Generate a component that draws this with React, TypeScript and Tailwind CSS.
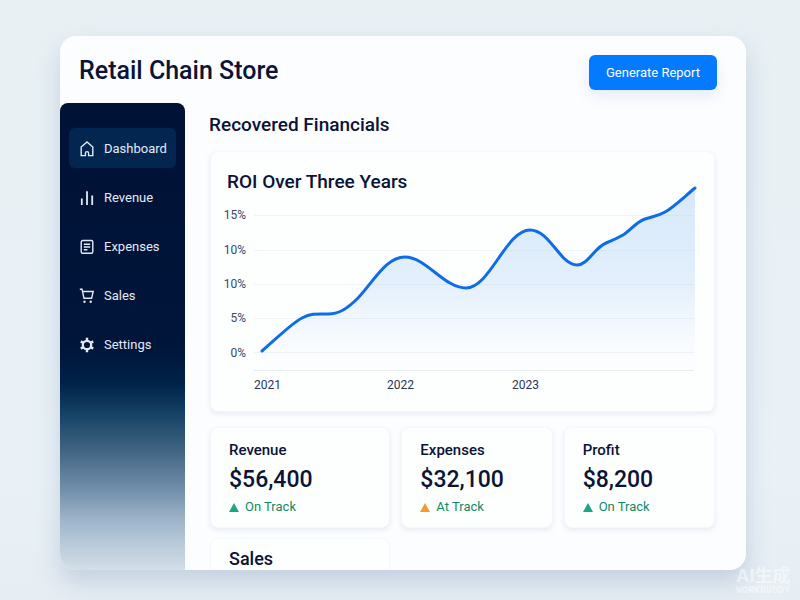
import React from "react";
import clsx from "clsx";

const navItems = [
  { label: "Dashboard", icon: "home", active: true },
  { label: "Revenue", icon: "bars", active: false },
  { label: "Expenses", icon: "doc", active: false },
  { label: "Sales", icon: "cart", active: false },
  { label: "Settings", icon: "gear", active: false },
];

const stats = [
  { label: "Revenue", value: "$56,400", status: "On Track", warn: false },
  { label: "Expenses", value: "$32,100", status: "At Track", warn: true },
  { label: "Profit", value: "$8,200", status: "On Track", warn: false },
];

const ticks = ["15%", "10%", "10%", "5%", "0%"];
const gridLines = [17, 52, 86, 120, 154];

const curve =
  "M8 153 C22 141 38 125 48 120 C58 115 64 116 74 116 C84 116 92 112 104 100 C120 83 132 59 151 59 C172 59 190 90 212 90 C236 90 252 32 276 32 C296 32 306 67 323 67 C334 67 340 50 352 45 C362 41 362 41 369 37 C376 33 382 24 391 21 C400 18 404 18 411 14 C420 9 430 -1 441 -10";

const NavIcon = ({ name }: { name: string }) => {
  return (
    <svg
      viewBox="0 0 16 16"
      className="size-4 shrink-0"
      fill="none"
      stroke="currentColor"
      strokeWidth="1.4"
      aria-hidden="true"
    >
      {name === "home" && (
        <path d="M2.2 6 8 1l5.800 5v8.600H9.600V12.200a1.600 1.600 0 0 0-3.200 0v2.400H2.200z" />
      )}
      {name === "bars" && (
        <path d="M2.800 8.500V15M8 1.200V15M13.200 5.500V15" strokeWidth="1.800" />
      )}
      {name === "doc" && (
        <>
          <rect x="2.200" y="1.500" width="11.600" height="12.800" rx="1.500" />
          <path d="M4.800 5.200h6.400M4.800 8h6.400M4.800 10.800h3.600" />
        </>
      )}
      {name === "cart" && (
        <>
          <path d="M.8 1.200h2.200L5 10.300h7.600L14.200 3.500H3.600" />
          <circle cx="5.500" cy="13.800" r="1.200" fill="currentColor" stroke="none" />
          <circle cx="11.700" cy="13.800" r="1.200" fill="currentColor" stroke="none" />
        </>
      )}
      {name === "gear" && (
        <>
          <circle cx="8" cy="8" r="4.200" strokeWidth="2.200" />
          <path
            d="M8 .8v2.400M8 12.800v2.400M1.800 4.400l2 1.200M12.200 10.400l2 1.200M1.800 11.600l2-1.200M12.200 5.600l2-1.200"
            strokeWidth="2.400"
          />
        </>
      )}
    </svg>
  );
};

const Sidebar = () => {
  return (
    <nav className="w-[125px] shrink-0 rounded-t-lg bg-[linear-gradient(180deg,#001236_0%,#00153a_52%,#002248_60%,#123f63_66%,#3f6281_74%,#7390ab_83%,#a3b8cd_90%,#d3dfe8_100%)] px-[9px] pt-[25px]">
      <ul className="flex flex-col gap-[9px]">
        {navItems.map((item) => (
          <li key={item.label}>
            <a
              href="#"
              className={clsx(
                "flex h-10 items-center gap-[9px] rounded-md pt-px pl-[10px] text-[13px] text-[#e3eaf8]",
                item.active && "bg-[#02264f]"
              )}
            >
              <NavIcon name={item.icon} />
              {item.label}
            </a>
          </li>
        ))}
      </ul>
    </nav>
  );
};

const RoiChart = () => {
  return (
    <section className="rounded-lg border border-[#f3f6fa] bg-[#fdfefe] pt-4 pr-5 pb-[18px] pl-4 shadow-[0_2px_5px_rgba(150,175,205,0.22)]">
      <h3 className="text-[19px] leading-7 font-medium">ROI Over Three Years</h3>
      <div className="mt-[2px] grid grid-cols-[19px_1fr] gap-x-2">
        <div className="flex flex-col text-right text-xs text-[#3a4769]">
          {ticks.map((tick, i) => (
            <span key={i} className="flex flex-1 items-center justify-end">
              {tick}
            </span>
          ))}
        </div>
        <svg
          viewBox="0 0 440 172"
          preserveAspectRatio="none"
          className="h-[172px] w-full overflow-visible"
          role="img"
          aria-label="ROI from 2021 to 2023"
        >
          <defs>
            <linearGradient id="area" x1="0" y1="-10" x2="0" y2="172" gradientUnits="userSpaceOnUse">
              <stop offset="0" stopColor="#d6e9fa" />
              <stop offset="0.5" stopColor="#e3effc" />
              <stop offset="0.85" stopColor="#f8fbfe" />
              <stop offset="1" stopColor="#fdfefe" />
            </linearGradient>
          </defs>
          <path d={`${curve} V172 H8 Z`} fill="url(#area)" />
          {gridLines.map((y) => (
            <path key={y} d={`M0 ${y}.5H440`} stroke="#b8cbdc" strokeOpacity="0.2" />
          ))}
          <path d="M0 172.500H440" stroke="#e6ecf2" />
          <path
            d={curve}
            fill="none"
            stroke="#0e6ce8"
            strokeWidth="3"
            strokeLinecap="round"
            vectorEffect="non-scaling-stroke"
          />
        </svg>
        <div className="col-start-2 mt-[7px] grid grid-cols-[133fr_125fr_182fr] text-xs text-[#2a3558]">
          <span>2021</span>
          <span>2022</span>
          <span>2023</span>
        </div>
      </div>
    </section>
  );
};

const StatCard = ({ label, value, status, warn }: (typeof stats)[number]) => {
  return (
    <section className="rounded-lg border border-[#f5f8fb] bg-[#fdfefe] px-[18px] pt-3 pb-[10px] shadow-[0_2px_5px_rgba(150,175,205,0.22)]">
      <h3 className="text-[15px] leading-5 font-medium">{label}</h3>
      <p className="mt-1 text-[23px] leading-8 font-medium">{value}</p>
      <p className="mt-px flex items-center gap-[6px] text-[13px] leading-5 text-[#0f8a68]">
        <svg
          viewBox="0 0 10 9"
          className={clsx("h-[9px] w-[10px]", warn ? "text-[#f29a2e]" : "text-[#1ba583]")}
          aria-hidden="true"
        >
          <path d="M5 0 10 9H0z" fill="currentColor" />
        </svg>
        {status}
      </p>
    </section>
  );
};

export default function App() {
  return (
    <div className="relative flex h-screen flex-col bg-[linear-gradient(180deg,#e8f0f4_0%,#e9f1f6_80%,#e6edf3_100%)] pt-9 pr-[54px] pb-[30px] pl-[60px] font-['Roboto','Liberation_Sans',sans-serif] text-[#0b1336]">
      <div className="flex min-h-0 flex-1 flex-col overflow-hidden rounded-2xl bg-[#fcfdfe] shadow-[0_12px_24px_rgba(120,145,180,0.32)]">
        <header className="flex h-[67px] shrink-0 items-center justify-between pt-[2px] pr-[29px] pl-[19px]">
          <h1 className="text-[25px] font-medium">Retail Chain Store</h1>
          <button
            type="button"
            className="mt-1 h-[35px] rounded-md bg-[#047aff] px-[17px] text-[13px] text-white shadow-[0_6px_14px_rgba(120,150,220,0.18)]"
          >
            Generate Report
          </button>
        </header>
        <div className="flex min-h-0 flex-1">
          <Sidebar />
          <main className="flex min-w-0 flex-1 flex-col pt-2 pr-[31px] pl-6">
            <h2 className="text-[19px] leading-7 font-medium">Recovered Financials</h2>
            <div className="mt-3 flex flex-col gap-[15px] pl-px">
              <RoiChart />
              <div className="grid grid-cols-[180fr_151fr_151fr] gap-x-[11px] gap-y-[10px]">
                {stats.map((stat) => (
                  <StatCard key={stat.label} {...stat} />
                ))}
                <section className="h-24 rounded-lg border border-[#f3f6fa] bg-[#fdfefe] px-[18px] pt-[6px]">
                  <h3 className="text-lg font-medium">Sales</h3>
                </section>
              </div>
            </div>
          </main>
        </div>
      </div>
      <div className="absolute right-1 bottom-1 w-[60px] text-white/50">
        <p className="font-['Inter','Noto_Sans_CJK_SC',sans-serif] text-lg leading-5 font-bold whitespace-nowrap">AI生成</p>
        <p className="font-['Liberation_Mono',monospace] text-[10px] leading-[10px] font-bold">WORKBUDDY</p>
      </div>
    </div>
  );
}
